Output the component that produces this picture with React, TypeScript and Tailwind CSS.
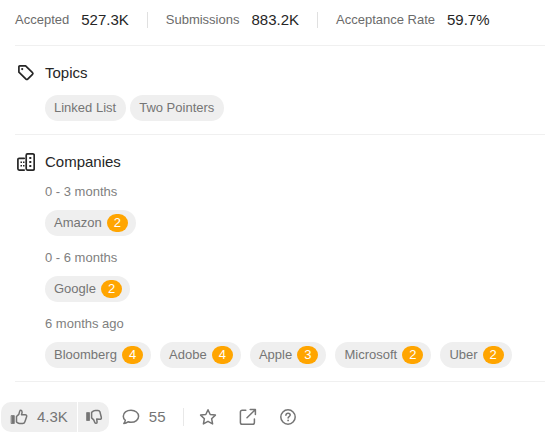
import type { ReactNode } from "react";

type Company = { name: string; count: number };

const stats = [
  { label: "Accepted", value: "527.3K" },
  { label: "Submissions", value: "883.2K" },
  { label: "Acceptance Rate", value: "59.7%" },
];

const topics = ["Linked List", "Two Pointers"];

const periods: { label: string; companies: Company[] }[] = [
  { label: "0 - 3 months", companies: [{ name: "Amazon", count: 2 }] },
  { label: "0 - 6 months", companies: [{ name: "Google", count: 2 }] },
  {
    label: "6 months ago",
    companies: [
      { name: "Bloomberg", count: 4 },
      { name: "Adobe", count: 4 },
      { name: "Apple", count: 3 },
      { name: "Microsoft", count: 2 },
      { name: "Uber", count: 2 },
    ],
  },
];

function Icon({ children }: { children: ReactNode }) {
  return (
    <svg
      viewBox="0 0 18 18"
      className="size-[18px] shrink-0"
      fill="none"
      stroke="currentColor"
      strokeWidth="1.5"
      strokeLinecap="round"
      strokeLinejoin="round"
      aria-hidden="true"
    >
      {children}
    </svg>
  );
}

function TagIcon() {
  return (
    <Icon>
      <path d="M1.9 2.7C1.9 2.2 2.3 1.8 2.8 1.8H8.6L15.5 8.6C16 9.1 16 9.8 15.5 10.3L10.7 15.1C10.2 15.6 9.5 15.6 9 15.1L1.9 8.2Z" strokeWidth="1.7" />
      <circle cx="5.2" cy="5.1" r="1.1" fill="currentColor" stroke="none" />
    </Icon>
  );
}

function CompanyIcon() {
  return (
    <Icon>
      <rect x="9.2" y=".9" width="8" height="16.2" rx="1.3" strokeWidth="1.7" />
      <path d="M7.2 5.3H2.2C1.4 5.3 .9 5.8 .9 6.6V15.8C.9 16.6 1.4 17.1 2.2 17.1H7.2" strokeWidth="1.7" />
      <path
        d="M3.5 8.5H5V10H3.5ZM6 8.5H7.5V10H6ZM3.5 12H5V13.5H3.5ZM6 12H7.5V13.5H6ZM12.3 4H14.3V6H12.3ZM12.3 8H14.3V10H12.3ZM12.3 12H14.3V14H12.3Z"
        fill="currentColor"
        stroke="none"
      />
    </Icon>
  );
}

function ThumbUpIcon() {
  return (
    <Icon>
      <path d="M1.5 7.6H4.3V15.5H1.5Z" fill="currentColor" strokeWidth=".8" />
      <path d="M6.5 8.5L8.8 6.4L9.8 2.9C10 2.1 11.2 2.1 11.8 2.9C12.5 4 12.1 5.3 11.5 6.8H15.2C16.4 6.8 17 7.8 16.6 8.8L14.9 13.7C14.5 15 13.8 15.5 12.6 15.5H9.7C8.4 15.5 7.4 14.6 6.5 14Z" />
    </Icon>
  );
}

function ThumbDownIcon() {
  return (
    <Icon>
      <path d="M1.9 4.6H4.5V12.5H1.9Z" fill="currentColor" strokeWidth=".8" />
      <path d="M6.6 4.4L8.6 2.9C9.1 2.5 9.7 2.4 10.4 2.4H13C14 2.4 14.6 2.8 14.9 3.7L16.3 9.2C16.6 10.4 16 11.4 14.8 11.3L11.7 11.1L12.1 14.1C12.2 15.6 10.3 15.8 9.8 14.5L8.7 11.9L6.6 9.9Z" />
    </Icon>
  );
}

function CommentIcon() {
  return (
    <Icon>
      <path d="M3.3 12.4C2 11.3 1.3 9.8 1.3 8.2C1.3 4.7 4.6 2.3 9 2.3S16.6 4.9 16.6 8.3S13.4 14.3 9 14.3C7.9 14.3 6.9 14.2 6 13.8C4.8 14.7 3.3 15.3 1.8 15.4C2.6 14.5 3.1 13.5 3.3 12.4Z" />
    </Icon>
  );
}

function StarIcon() {
  return (
    <Icon>
      <path d="M9 1.7L11.2 6.5L16.4 7.1L12.6 10.7L13.6 15.9L9 13.3L4.4 15.9L5.4 10.7L1.6 7.1L6.8 6.5Z" />
    </Icon>
  );
}

function ShareIcon() {
  return (
    <Icon>
      <path d="M6.8 2.2H3.2C2.1 2.2 1.4 2.9 1.4 4V14.4C1.4 15.5 2.1 16.2 3.2 16.2H13.6C14.7 16.2 15.4 15.5 15.4 14.4V11M8 9.7L16.2 1.7M11.2 1.6H16.4V6.6" />
    </Icon>
  );
}

function HelpIcon() {
  return (
    <Icon>
      <circle cx="9" cy="9" r="7.2" />
      <path d="M6.9 7.2C7 5.9 7.9 5.3 9.1 5.3C10.3 5.3 11.2 6 11.2 7.1C11.2 8.6 9.1 8.6 9.1 10" />
      <circle cx="9.1" cy="12.4" r=".9" fill="currentColor" stroke="none" />
    </Icon>
  );
}

function Section({ icon, title, children }: { icon: ReactNode; title: string; children: ReactNode }) {
  return (
    <section className="ml-[15px] border-b border-[#f0f0f0] pt-4 pb-[13px]">
      <h2 className="flex h-[22px] items-center gap-[10px] pl-0.5 text-[15px] text-[#262626]">
        {icon}
        {title}
      </h2>
      <div className="pl-[30px]">{children}</div>
    </section>
  );
}

function CompanyPill({ name, count }: Company) {
  return (
    <a
      href="#company"
      className="flex h-[26px] items-center gap-[5px] rounded-full bg-[#efefef] pr-2 pl-[9px] text-[13px] text-[#757575]"
    >
      {name}
      <span className="flex h-[18px] items-center rounded-full bg-[#ffa500] px-[7px] text-white">{count}</span>
    </a>
  );
}

export default function App() {
  return (
    <main className="bg-white font-['Liberation_Sans',Arial,sans-serif]">
      <dl className="ml-[15px] flex border-b border-[#f0f0f0] pt-2 pb-[13px]">
        {stats.map((stat, i) => (
          <div key={stat.label} className="flex h-6 items-center">
            {i > 0 && <span className="mx-[18px] h-4 w-px bg-[#e0e0e0]" />}
            <dt className="text-[13px] text-[#6b6b6b]">{stat.label}</dt>
            <dd className="ml-3 text-[15px] text-[#262626]">{stat.value}</dd>
          </div>
        ))}
      </dl>

      <Section icon={<TagIcon />} title="Topics">
        <div className="mt-[11px] flex flex-wrap gap-1">
          {topics.map((topic) => (
            <a
              key={topic}
              href="#topic"
              className="flex h-[26px] items-center rounded-full bg-[#efefef] pr-[10px] pl-[9px] text-[13px] text-[#757575]"
            >
              {topic}
            </a>
          ))}
        </div>
      </Section>

      <Section icon={<CompanyIcon />} title="Companies">
        <div className="mt-[9px] flex flex-col gap-3">
          {periods.map((period) => (
            <div key={period.label} className="flex flex-col gap-2">
              <h3 className="text-[13px] leading-5 text-[#808080]">{period.label}</h3>
              <div className="flex flex-wrap gap-[9px]">
                {period.companies.map((company) => (
                  <CompanyPill key={company.name} {...company} />
                ))}
              </div>
            </div>
          ))}
        </div>
      </Section>

      <footer className="flex items-center pt-5 pl-px text-[15px] text-[#757575]">
        <div className="flex gap-px overflow-hidden rounded-[10px]">
          <button type="button" aria-label="Like" className="flex h-[30px] items-center gap-[9px] bg-[#efefef] px-[9px]">
            <ThumbUpIcon />
            4.3K
          </button>
          <button type="button" aria-label="Dislike" className="flex h-[30px] items-center bg-[#efefef] px-[6px] pl-[7px]">
            <ThumbDownIcon />
          </button>
        </div>
        <button type="button" aria-label="Comments" className="ml-[13px] flex h-[30px] items-center gap-[9px]">
          <CommentIcon />
          55
        </button>
        <span className="mr-[15px] ml-[17px] h-[18px] w-px bg-[#e8e8e8]" />
        <div className="flex gap-[22px]">
          <button type="button" aria-label="Favorite">
            <StarIcon />
          </button>
          <button type="button" aria-label="Share">
            <ShareIcon />
          </button>
          <button type="button" aria-label="Help">
            <HelpIcon />
          </button>
        </div>
      </footer>
    </main>
  );
}
